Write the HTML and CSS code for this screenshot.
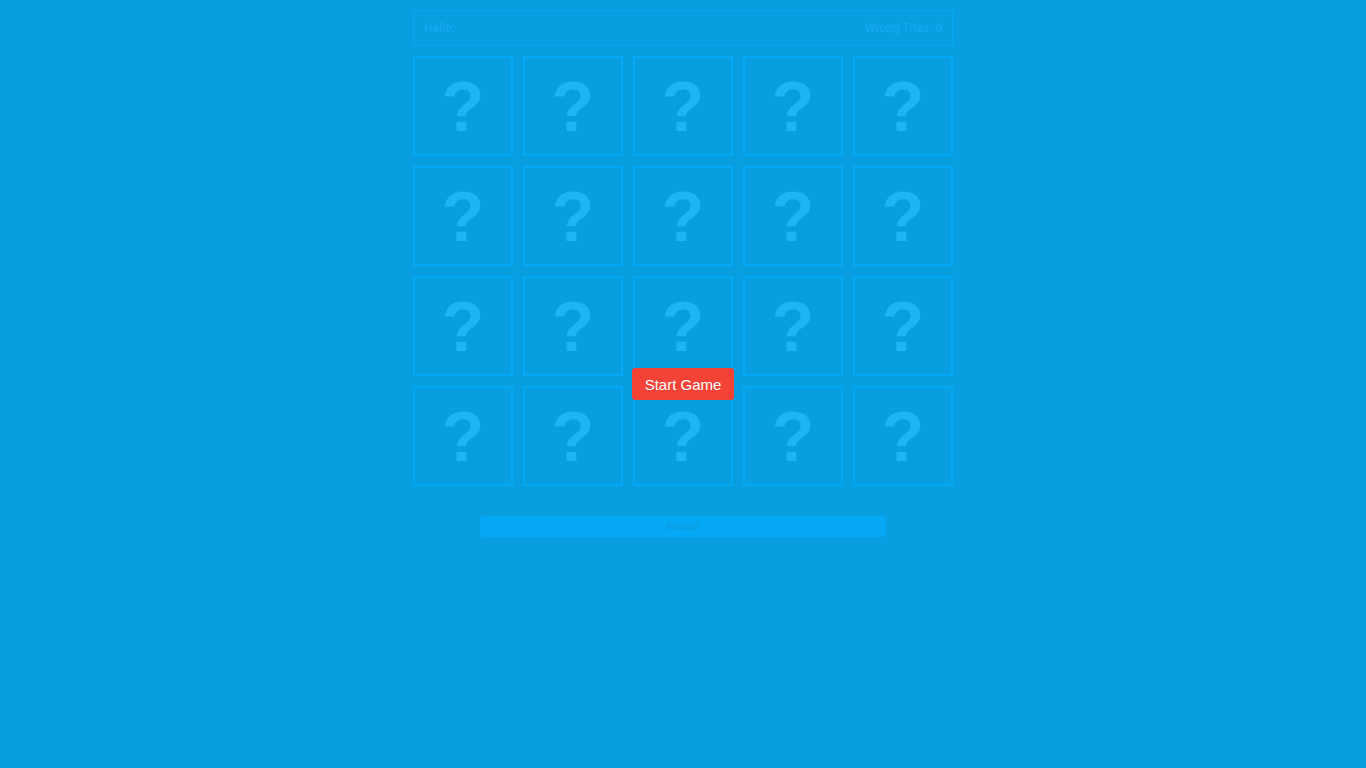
FILE: index.html
```html
<!DOCTYPE html>
<html>
<head>
<meta charset="utf-8">
<title>Memory Game</title>
<link rel="stylesheet" href="styles.css">
</head>
<body>
<div class="game">
  <div class="header">
    <span class="hello">Hello:</span>
    <span class="tries">Wrong Tries: 0</span>
  </div>
  <div class="grid">
    <div class="card">?</div><div class="card">?</div><div class="card">?</div><div class="card">?</div><div class="card">?</div>
    <div class="card">?</div><div class="card">?</div><div class="card">?</div><div class="card">?</div><div class="card">?</div>
    <div class="card">?</div><div class="card">?</div><div class="card">?</div><div class="card">?</div><div class="card">?</div>
    <div class="card">?</div><div class="card">?</div><div class="card">?</div><div class="card">?</div><div class="card">?</div>
  </div>
  <button class="reload">Reload</button>
</div>
<button class="start">Start Game</button>
</body>
</html>
```
FILE: styles.css
```css
html, body {
  margin: 0;
  padding: 0;
  background: #089ee0;
  height: 100%;
}
body {
  font-family: "Liberation Sans", Arial, sans-serif;
}
.game {
  width: 540px;
  margin: 10px auto 0;
  display: flex;
  flex-direction: column;
  align-items: center;
}
.header {
  box-sizing: border-box;
  width: 540px;
  height: 36px;
  border: 1px solid #03a9f4;
  display: flex;
  justify-content: space-between;
  align-items: center;
  padding: 0 10px 1px;
  font-family: Roboto, "Liberation Sans", sans-serif;
  font-weight: 500;
  font-size: 12px;
  color: #16a8f0;
}
.grid {
  margin-top: 10px;
  display: grid;
  grid-template-columns: repeat(5, 100px);
  grid-auto-rows: 100px;
  gap: 10px;
}
.card {
  box-sizing: border-box;
  border: 2px solid #03a9f4;
  display: flex;
  align-items: center;
  justify-content: center;
  font-family: "Liberation Sans", Arial, sans-serif;
  font-weight: bold;
  font-size: 70px;
  color: #1eb4f6;
  line-height: 1;
  padding-top: 2px;
}
.reload {
  margin-top: 30px;
  width: 406px;
  height: 21px;
  border: none;
  border-radius: 3px;
  background: #04a8f5;
  color: #0b9de2;
  font-family: "Liberation Sans", Arial, sans-serif;
  font-weight: bold;
  font-size: 10px;
  padding: 0;
}
.start {
  position: fixed;
  left: 50%;
  top: 50%;
  transform: translate(-50%, -50%);
  width: 102px;
  height: 32px;
  border: none;
  border-radius: 3px;
  background: #f44336;
  color: #fff;
  font-family: "Liberation Sans", Arial, sans-serif;
  font-size: 15px;
  padding: 0;
}
```
